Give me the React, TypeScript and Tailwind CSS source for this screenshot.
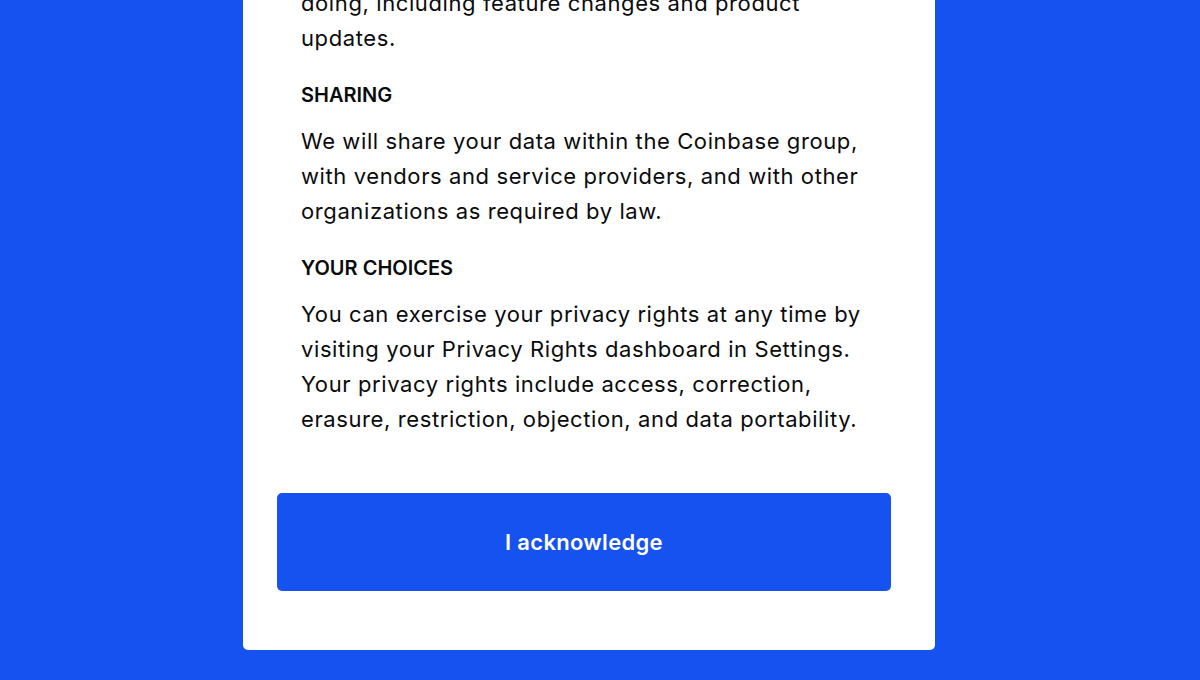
import React from 'react';

const sections = [
  {
    title: 'USE',
    lines: [
      'We use your data to provide and improve our',
      'services, keep your account safe, and tell you',
      'about what we are doing, and what we plan on',
      'doing, including feature changes and product',
      'updates.',
    ],
  },
  {
    title: 'SHARING',
    lines: [
      'We will share your data within the Coinbase group,',
      'with vendors and service providers, and with other',
      'organizations as required by law.',
    ],
  },
  {
    title: 'YOUR CHOICES',
    lines: [
      'You can exercise your privacy rights at any time by',
      'visiting your Privacy Rights dashboard in Settings.',
      'Your privacy rights include access, correction,',
      'erasure, restriction, objection, and data portability.',
    ],
  },
];

export default function App() {
  return (
    <div
      className="flex h-[680px] w-full flex-col justify-end overflow-hidden bg-[#1652f0]"
      style={{ fontFamily: 'Inter, "Liberation Sans", sans-serif' }}
    >
      <div className="mb-[30px] ml-[243px] w-[692px] shrink-0 rounded-[5px] bg-white pb-[59px] pl-[34px] pr-[44px]">
        <div className="flex flex-col gap-[25px] px-[24px]">
          {sections.map((s) => (
            <div key={s.title}>
              <h3 className="mb-[15px] text-[20px] font-semibold leading-[28px] text-[#0a0b0d]">
                {s.title}
              </h3>
              <p className="text-[22px] leading-[35px] tracking-[0.6px] text-[#0a0b0d]">
                {s.lines.map((l, i) => (
                  <span key={i} className="block whitespace-nowrap">
                    {l}
                  </span>
                ))}
              </p>
            </div>
          ))}
        </div>
        <button className="mt-[56px] flex h-[98px] w-full items-center justify-center rounded-[5px] bg-[#1652f0] text-[22px] font-semibold tracking-[0.3px] text-white">
          I acknowledge
        </button>
      </div>
    </div>
  );
}
